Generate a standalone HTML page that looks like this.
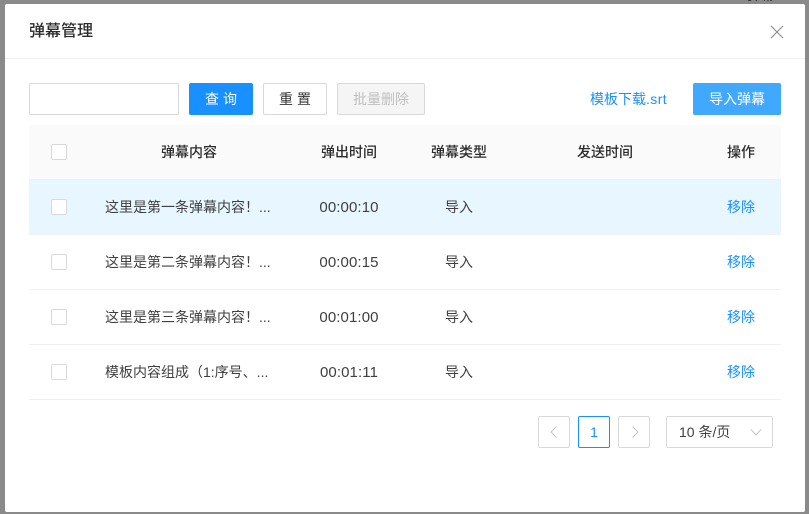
<!DOCTYPE html>
<html lang="zh">
<head>
<meta charset="utf-8">
<style>
html,body{margin:0;padding:0;width:809px;height:514px;overflow:hidden;background:#8a8a8a;}
body{position:relative;font-family:"Liberation Sans","Noto Sans CJK SC",sans-serif;font-size:14px;color:#3f3f3f;text-spacing-trim:space-all;}
.a{position:absolute;box-sizing:border-box;}
.t{position:absolute;white-space:nowrap;line-height:20px;height:20px;}
.c{transform:translateX(-50%);}
.n{font-size:15px;letter-spacing:.1px;margin-top:1px;}
.cb{position:absolute;left:51px;width:16px;height:16px;box-sizing:border-box;border:1px solid #d9d9d9;border-radius:2px;background:#fff;}
.btn{position:absolute;top:83px;height:32px;box-sizing:border-box;border-radius:2px;text-align:center;line-height:30px;font-size:14px;white-space:nowrap;}
.sp{letter-spacing:4px;padding-left:4px;}
.line{position:absolute;left:29px;width:752px;height:1px;background:#f0f0f0;}
.th{font-weight:500;color:#2b2b2b;}
.link{color:#1890ff;}
.pg{position:absolute;top:416px;width:32px;height:32px;box-sizing:border-box;border:1px solid #d9d9d9;border-radius:2px;background:#fff;}
</style>
</head>
<body>
<div class="t" style="left:747px;top:-15px;color:#333;font-size:14px">弹幕</div>
<div class="a" style="left:5px;top:4px;width:800px;height:508px;background:#fff;border-radius:2px;"></div>
<div class="t" style="left:29px;top:22px;font-size:16px;color:#2b2b2b;font-weight:500">弹幕管理</div>
<svg class="a" style="left:770px;top:25px" width="14" height="14" viewBox="0 0 14 14"><path d="M1 1L13 13M13 1L1 13" stroke="#8c8c8c" stroke-width="1.1" fill="none"/></svg>
<div class="a" style="left:5px;top:58px;width:800px;height:1px;background:#f0f0f0"></div>

<div class="a" style="left:29px;top:83px;width:150px;height:32px;border:1px solid #d9d9d9;border-radius:2px;background:#fff"></div>
<div class="btn sp" style="left:189px;width:64px;background:#1890ff;border:1px solid #1890ff;color:#fff;">查询</div>
<div class="btn sp" style="left:263px;width:64px;background:#fff;border:1px solid #d9d9d9;color:#333;">重置</div>
<div class="btn" style="left:337px;width:88px;background:#f5f5f5;border:1px solid #d9d9d9;color:#bfbfbf;">批量删除</div>
<div class="t link" style="left:590px;top:89px">模板下载<span style="letter-spacing:.4px">.srt</span></div>
<div class="btn" style="left:693px;width:88px;background:#40a9ff;border:1px solid #40a9ff;color:#fff;">导入弹幕</div>

<div class="a" style="left:29px;top:125px;width:752px;height:54px;background:#fafafa"></div>
<div class="line" style="top:179px"></div>
<div class="a" style="left:29px;top:180px;width:752px;height:54px;background:#e8f7ff"></div>
<div class="line" style="top:234px"></div>
<div class="line" style="top:289px"></div>
<div class="line" style="top:344px"></div>
<div class="line" style="top:399px"></div>

<div class="cb" style="top:144px"></div>
<div class="t c th" style="left:189px;top:142px">弹幕内容</div>
<div class="t c th" style="left:349px;top:142px">弹出时间</div>
<div class="t c th" style="left:459px;top:142px">弹幕类型</div>
<div class="t c th" style="left:605px;top:142px">发送时间</div>
<div class="t c th" style="left:741px;top:142px">操作</div>

<div class="cb" style="top:199px"></div>
<div class="t" style="left:105px;top:197px">这里是第一条弹幕内容！...</div>
<div class="t c n" style="left:349px;top:197px">00:00:10</div>
<div class="t c" style="left:459px;top:197px">导入</div>
<div class="t c link" style="left:741px;top:197px">移除</div>

<div class="cb" style="top:254px"></div>
<div class="t" style="left:105px;top:252px">这里是第二条弹幕内容！...</div>
<div class="t c n" style="left:349px;top:252px">00:00:15</div>
<div class="t c" style="left:459px;top:252px">导入</div>
<div class="t c link" style="left:741px;top:252px">移除</div>

<div class="cb" style="top:309px"></div>
<div class="t" style="left:105px;top:307px">这里是第三条弹幕内容！...</div>
<div class="t c n" style="left:349px;top:307px">00:01:00</div>
<div class="t c" style="left:459px;top:307px">导入</div>
<div class="t c link" style="left:741px;top:307px">移除</div>

<div class="cb" style="top:364px"></div>
<div class="t" style="left:105px;top:362px">模板内容组成（1:序号、...</div>
<div class="t c n" style="left:349px;top:362px">00:01:11</div>
<div class="t c" style="left:459px;top:362px">导入</div>
<div class="t c link" style="left:741px;top:362px">移除</div>

<div class="pg" style="left:538px"><svg style="position:absolute;left:10px;top:9px" width="10" height="12" viewBox="0 0 10 12"><path d="M7.5 .5L2 6L7.5 11.5" stroke="#c4c4c4" stroke-width="1" fill="none"/></svg></div>
<div class="pg" style="left:578px;border-color:#1890ff;color:#1890ff;text-align:center;line-height:30px">1</div>
<div class="pg" style="left:618px"><svg style="position:absolute;left:11px;top:9px" width="10" height="12" viewBox="0 0 10 12"><path d="M2.5 .5L8 6L2.5 11.5" stroke="#c4c4c4" stroke-width="1" fill="none"/></svg></div>
<div class="pg" style="left:666px;width:107px"></div>
<div class="t" style="left:679px;top:422px">10 条/页</div>
<svg class="a" style="left:750px;top:428px" width="12" height="9" viewBox="0 0 12 9"><path d="M1 1.5L6 7L11 1.5" stroke="#c4c4c4" stroke-width="1" fill="none"/></svg>
</body>
</html>
